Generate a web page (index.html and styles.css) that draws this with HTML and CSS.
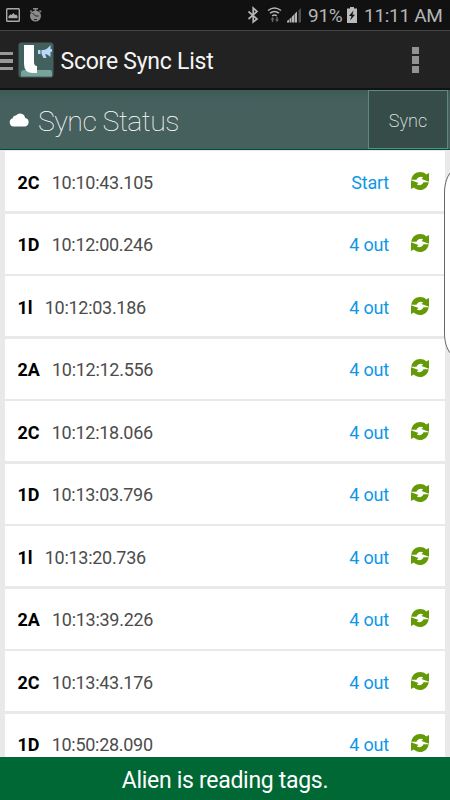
FILE: index.html
```html
<!DOCTYPE html>
<html lang="en">
<head>
<meta charset="utf-8">
<title>Score Sync List</title>
<link rel="stylesheet" href="styles.css">
</head>
<body>
<svg class="defs" aria-hidden="true">
  <symbol id="sync" viewBox="0 0 18 18">
    <path d="M.3 7.800C1 3 4.600 0 9 0c2.600 0 4.600.8 6.200 2.400L18 1v8.800l-7.500-2.800 1.700-1.500C9.800 4.200 6.800 4.800 5.500 7.800zM17.700 10.200c-.7 4.800-4.300 7.800-8.700 7.800-2.600 0-4.600-.8-6.200-2.400L0 17V8.200l7.500 2.800-1.700 1.500c2.400 1.300 5.400.7 6.700-2.300z"/>
  </symbol>
</svg>
<div class="screen">
  <div class="status">
    <svg class="status-left" width="50" height="30" viewBox="0 0 50 30">
      <rect x="6.700" y="8.700" width="12.600" height="12.600" rx=".8" fill="none" stroke="#aaa" stroke-width="1.400"/>
      <path d="M8.500 18.300v-2l2-2 1.200.8 1.500-2 2 2 1-.6 1.300 1.500v2.300z" fill="#aaa"/>
      <circle cx="35.500" cy="16" r="5.500" fill="#8a8a8a"/>
      <path d="M33 8.700h5M35.500 9v2M39.500 10.500l1.500 1.500M31.700 10.500L30.300 12" stroke="#8a8a8a" stroke-width="1.500"/>
      <path d="M32.500 13l3 3M35.500 16h3M34 19.500h3" stroke="#222" stroke-width="1"/>
    </svg>
    <svg class="status-signal" width="60" height="30" viewBox="0 0 60 30">
      <path d="M2.500 11.500l8.500 7.500-3.800 3V8l3.800 3.500L2.500 19" fill="none" stroke="#b5b5b5" stroke-width="1.700"/>
      <g fill="none" stroke="#b5b5b5" stroke-width="1.500"><path d="M22 10.500q6.500-5 13 0M24 13.200q4.500-3.400 9 0M26.200 15.900q2.300-1.600 4.600 0"/></g>
      <path d="M24.500 19.500l2-2.500 2 2.500h-1.300v2.500h-1.400v-2.500zM29 19.500h1.300V17h1.400v2.500H33L31 22z" fill="#666"/>
      <g fill="#b5b5b5"><path d="M41 21l2-1.500v3h-2zM43.500 19l2-2v5.500h-2zM46 16.500l2-2v8h-2zM48.500 14l2.500-2.500v11h-2.500z"/><path fill="#505050" d="M52.500 10.500l2.500-2.500v14.500h-2.500z"/></g>
    </svg>
    <span class="battery">91%</span>
    <svg class="cell" width="10" height="16" viewBox="0 0 10 16">
      <path d="M3 0h4v1.500h3V16H0V1.500h3z" fill="#bbb"/><path d="M6.500 3.500L2 9h2.500L3 13.500 8 7.800H5.500z" fill="#111"/>
    </svg>
    <span class="clock">11:11 AM</span>
  </div>
  <div class="bar">
    <div class="burger"><i></i><i></i><i></i></div>
    <svg class="logo" width="36" height="36" viewBox="0 0 36 36">
      <rect x=".5" y=".5" width="35" height="35" rx="3" fill="#42605e"/>
      <path d="M3 31q0-3 3-3h26q2 0 2 3v3.500H3z" fill="#78a39d"/>
      <path d="M6 3h10v17q0 4 3 4v7h-4q-9 0-9-9z" fill="#fff"/>
      <path d="M20 8h5q4 0 7.500-5v4l1.500.3v2.400l-1.500.3v5q-3-3-5.500-3l1.500 4h-3l-2-4H20z" fill="#b9d9fa"/>
      <path d="M23 8v4" stroke="#42605e"/>
    </svg>
    <h1>Score Sync List</h1>
    <div class="more"><i></i><i></i><i></i></div>
  </div>
  <div class="heading">
    <svg class="cloud" width="20" height="14" viewBox="0 0 20 14">
      <path d="M4.500 13.500a4.200 4.200 0 0 1-.8-8.200A3.300 3.300 0 0 1 7 2.500 5.200 5.200 0 0 1 16.200 5a4.300 4.300 0 0 1-.7 8.500z" fill="#fff"/>
    </svg>
    <h2>Sync Status</h2>
    <button class="sync">Sync</button>
  </div>
  <div class="list">
    <div class="row"><b>2C</b><span class="time">10:10:43.105</span><span class="state">Start</span><svg class="ico"><use href="#sync"/></svg></div>
    <div class="row"><b>1D</b><span class="time">10:12:00.246</span><span class="state">4 out</span><svg class="ico"><use href="#sync"/></svg></div>
    <div class="row"><b>1l</b><span class="time">10:12:03.186</span><span class="state">4 out</span><svg class="ico"><use href="#sync"/></svg></div>
    <div class="row"><b>2A</b><span class="time">10:12:12.556</span><span class="state">4 out</span><svg class="ico"><use href="#sync"/></svg></div>
    <div class="row"><b>2C</b><span class="time">10:12:18.066</span><span class="state">4 out</span><svg class="ico"><use href="#sync"/></svg></div>
    <div class="row"><b>1D</b><span class="time">10:13:03.796</span><span class="state">4 out</span><svg class="ico"><use href="#sync"/></svg></div>
    <div class="row"><b>1l</b><span class="time">10:13:20.736</span><span class="state">4 out</span><svg class="ico"><use href="#sync"/></svg></div>
    <div class="row"><b>2A</b><span class="time">10:13:39.226</span><span class="state">4 out</span><svg class="ico"><use href="#sync"/></svg></div>
    <div class="row"><b>2C</b><span class="time">10:13:43.176</span><span class="state">4 out</span><svg class="ico"><use href="#sync"/></svg></div>
    <div class="row"><b>1D</b><span class="time">10:50:28.090</span><span class="state">4 out</span><svg class="ico"><use href="#sync"/></svg></div>
    <div class="edge"></div>
  </div>
  <div class="footer">Alien is reading tags.</div>
</div>
</body>
</html>
```
FILE: styles.css
```css
* { box-sizing: border-box; }
body { margin: 0; font-family: Roboto, "Liberation Sans", sans-serif; }
.defs { display: none; }
h1, h2 { margin: 0; font-weight: 400; }
.screen { width: 450px; height: 800px; overflow: hidden; display: flex; flex-direction: column; }
.status { height: 30px; flex: none; background: #111; color: #b5b5b5; display: flex; align-items: center; font-size: 19px; white-space: nowrap; }
.status-signal { margin-left: 196px; flex: none; }
.battery { width: 36px; margin-left: 2px; letter-spacing: -0.3px; padding-top: 1px; }
.cell { margin-left: 3px; flex: none; }
.clock { margin-left: 7px; letter-spacing: -0.300px; padding-top: 1px; }
.bar { height: 60px; flex: none; background: #222; border-top: 1px solid #444; border-bottom: 2px solid #151113; display: flex; align-items: center; padding-right: 31px; }
.burger { width: 13px; display: flex; flex-direction: column; gap: 4px; padding-top: 3px; }
.burger i { height: 3.500px; background: #999; }
.logo { margin-left: 4.500px; flex: none; }
h1 { font-size: 23px; letter-spacing: -0.250px; color: #f4f4f4; margin-left: 7px; padding-top: 4px; white-space: nowrap; }
.more { margin-left: auto; display: flex; flex-direction: column; gap: 2px; padding-top: 1px; }
.more i { width: 7px; height: 7.500px; background: #929292; }
.heading { height: 60px; flex: none; background: linear-gradient(#3e5a57, #46605e 12px, #46605e); border-bottom: 1px solid #004d40; display: flex; align-items: center; padding: 0 2px 0 9px; }
.cloud { flex: none; margin-top: 1px; }
h2 { font-size: 28.500px; font-weight: 100; letter-spacing: -0.550px; color: #fff; margin-left: 9px; padding-top: 3px; white-space: nowrap; }
.sync { margin-left: auto; width: 80px; height: 59px; background: #354c49; border: 1px solid #5a8a82; color: #e6ebea; font: 200 18px Roboto, sans-serif; padding: 2px 0 0; }
.list { position: relative; flex: 1; min-height: 0; overflow: hidden; background: #e9e9e9; padding: 1px 5px 0; }
.row { height: 60px; margin-bottom: 2.500px; background: #fff; display: flex; align-items: center; padding: 2px 16px 0 12.500px; font-size: 18px; white-space: nowrap; }
.row b { color: #000; letter-spacing: -0.200px; }
.time { color: #4c4c4c; margin-left: 12.500px; font-weight: 400; letter-spacing: -0.280px; }
.state { color: #0e97e6; margin-left: auto; margin-right: 22px; letter-spacing: -0.200px; }
.ico { width: 18px; height: 18px; fill: #639a06; margin-top: -2.500px; flex: none; }
.edge { position: absolute; left: 444px; top: 21px; width: 24px; height: 184px; background: #fff; border: 1px solid #666; border-radius: 10px / 22px; }
.footer { height: 43px; flex: none; background: #006834; color: #fff; font-size: 23px; letter-spacing: -0.300px; display: flex; align-items: center; justify-content: center; padding-top: 3px; }
```
